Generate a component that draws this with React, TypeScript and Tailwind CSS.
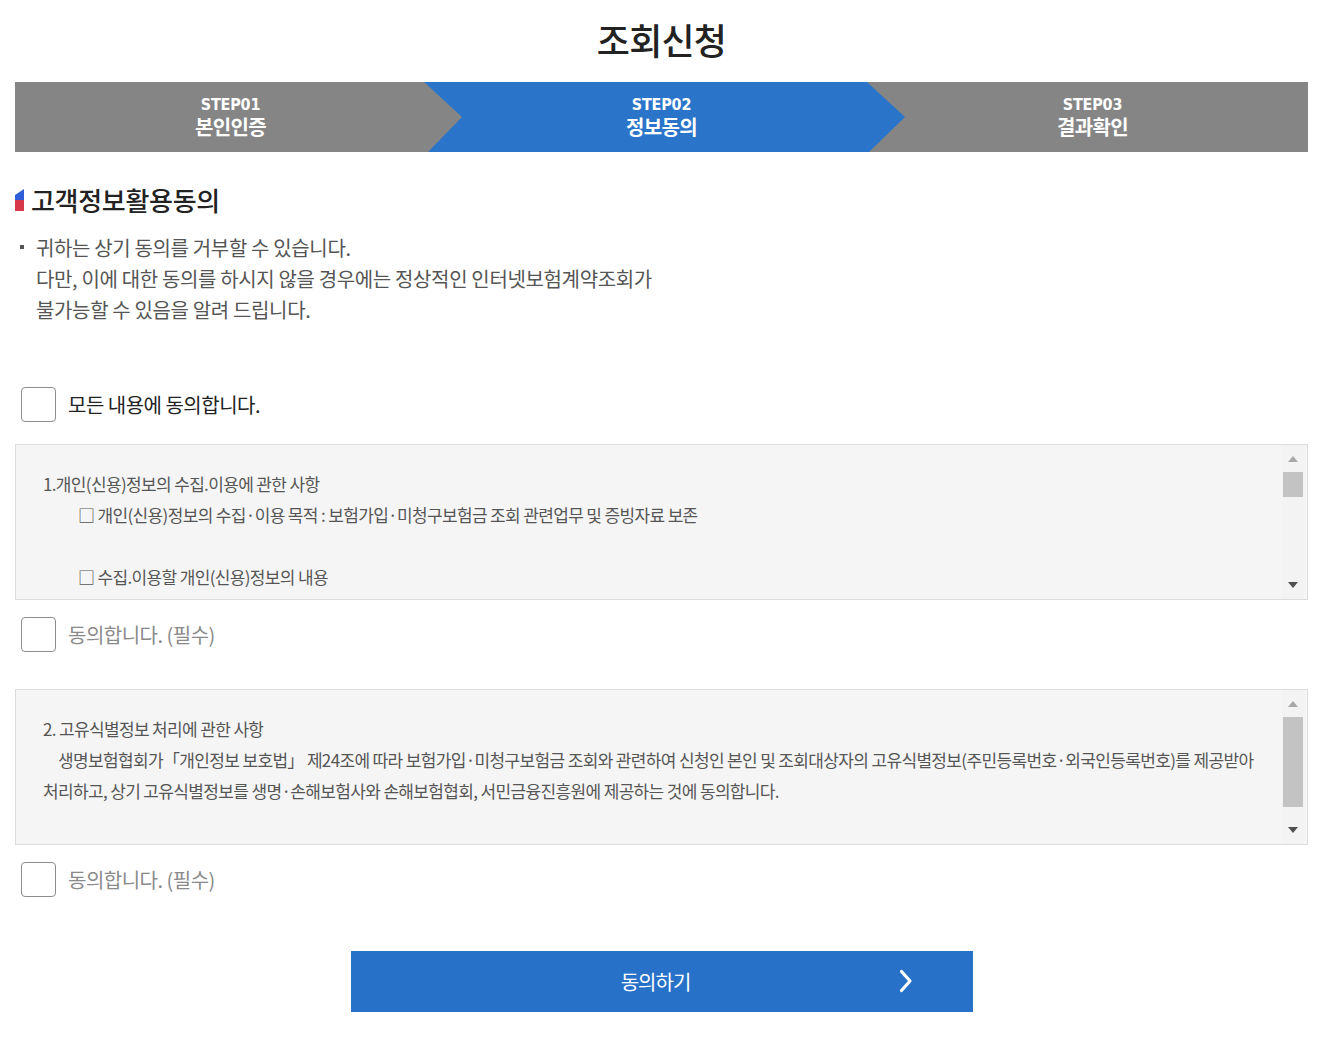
import React from "react";

const KR = "font-['Noto_Sans_CJK_KR','Noto_Sans',sans-serif]";

const steps = [
  { no: "STEP01", label: "본인인증" },
  { no: "STEP02", label: "정보동의" },
  { no: "STEP03", label: "결과확인" },
];

function StepBar() {
  return (
    <div className="relative h-[70px] bg-[#858585] overflow-hidden">
      {/* 현재 단계 화살표 */}
      <div className="absolute top-0 left-[409px] h-full w-[481px] bg-[#2a74c9] [clip-path:polygon(0_0,443px_0,481px_50%,445px_100%,4px_100%,38px_50%)]" />
      <div className="relative grid grid-cols-3 h-full">
        {steps.map((s) => (
          <div key={s.no} className="flex flex-col items-center justify-center text-white">
            <span className="font-['DejaVu_Sans_Condensed','DejaVu_Sans',sans-serif] font-bold text-[16px] leading-[18px] tracking-[-0.2px]">
              {s.no}
            </span>
            <span className={`${KR} font-bold text-[20px] leading-[25px] tracking-[-0.6px]`}>{s.label}</span>
          </div>
        ))}
      </div>
    </div>
  );
}

function CheckRow({ label, muted }: { label: string; muted?: boolean }) {
  return (
    <label className="flex items-center gap-3 ml-[6px] h-[35px]">
      <span className="w-[35px] h-[35px] rounded-[4px] border-[1.5px] border-[#8d8d8d] bg-white" />
      <span className={`text-[20px] tracking-[-0.5px] ${muted ? "text-[#8a8a8a]" : "text-[#222]"}`}>{label}</span>
    </label>
  );
}

function Scrollbar({ thumbTop, thumbHeight }: { thumbTop: number; thumbHeight: number }) {
  return (
    <div className="relative w-[22px] mr-[3px] h-full bg-[#f3f3f3] flex flex-col items-center justify-between py-[11px]">
      <svg width="10" height="6" viewBox="0 0 10 6">
        <path d="M0 6 L5 0 L10 6 Z" fill="#a8a8a8" />
      </svg>
      <div
        className="absolute left-[1px] right-[1px] bg-[#c3c3c3]"
        style={{ top: thumbTop, height: thumbHeight }}
      />
      <svg width="10" height="6" viewBox="0 0 10 6">
        <path d="M0 0 L10 0 L5 6 Z" fill="#4f4f4f" />
      </svg>
    </div>
  );
}

function TermsBox({ children, thumbTop, thumbHeight }: { children: React.ReactNode; thumbTop: number; thumbHeight: number }) {
  return (
    <div className="h-[156px] border border-[#dcdcdc] bg-[#f5f5f5] flex overflow-hidden">
      <div className="flex-1 pl-[27px] pt-[23px] text-[17px] leading-[31px] tracking-[-0.65px] text-[#555] overflow-hidden whitespace-nowrap">
        {children}
      </div>
      <Scrollbar thumbTop={thumbTop} thumbHeight={thumbHeight} />
    </div>
  );
}

export default function App() {
  return (
    <div className={`${KR} w-[1329px] min-h-[1042px] bg-white pl-[15px] pr-[21px] pb-[30px]`}>
      <h1 className="text-center text-[36px] font-medium text-[#222] leading-[46px] pt-[16px] pb-[20px] tracking-[-0.8px]">조회신청</h1>

      <StepBar />

      {/* 고객정보활용동의 */}
      <div className="flex items-center gap-[7px] mt-[31px]">
        <svg width="9" height="22" viewBox="0 0 9 22">
          <path d="M0 6 L9 0 L9 11 L0 11 Z" fill="#2f5fd6" />
          <path d="M0 11 L9 11 L9 22 L0 22 Z" fill="#d8394a" />
        </svg>
        <h2 className="text-[26px] font-medium text-[#222] leading-[34px] tracking-[-0.3px]">고객정보활용동의</h2>
      </div>

      <div className="flex ml-[5px] mt-[15px] text-[20px] leading-[31px] tracking-[-0.35px] text-[#555]">
        <span className="w-[16px] flex justify-start pt-[13px]">
          <span className="w-[4px] h-[4px] bg-[#555] block" />
        </span>
        <p>
          귀하는 상기 동의를 거부할 수 있습니다.
          <br />
          다만, 이에 대한 동의를 하시지 않을 경우에는 정상적인 인터넷보험계약조회가
          <br />
          불가능할 수 있음을 알려 드립니다.
        </p>
      </div>

      <div className="mt-[62px]">
        <CheckRow label="모든 내용에 동의합니다." />
      </div>

      <div className="mt-[22px]">
        <TermsBox thumbTop={27} thumbHeight={25}>
          <p>1.개인(신용)정보의 수집.이용에 관한 사항</p>
          <p className="pl-[35px]">□ 개인(신용)정보의 수집·이용 목적 : 보험가입·미청구보험금 조회 관련업무 및 증빙자료 보존</p>
          <p>&nbsp;</p>
          <p className="pl-[35px]">□ 수집.이용할 개인(신용)정보의 내용</p>
        </TermsBox>
      </div>

      <div className="mt-[17px]">
        <CheckRow label="동의합니다. (필수)" muted />
      </div>

      <div className="mt-[37px]">
        <TermsBox thumbTop={27} thumbHeight={90}>
          <p>2. 고유식별정보 처리에 관한 사항</p>
          <p className="pl-[15px]">
            생명보험협회가「개인정보 보호법」 제24조에 따라 보험가입·미청구보험금 조회와 관련하여 신청인 본인 및 조회대상자의 고유식별정보(주민등록번호·외국인등록번호)를 제공받아
          </p>
          <p>처리하고, 상기 고유식별정보를 생명·손해보험사와 손해보험협회, 서민금융진흥원에 제공하는 것에 동의합니다.</p>
        </TermsBox>
      </div>

      <div className="mt-[17px]">
        <CheckRow label="동의합니다. (필수)" muted />
      </div>

      <div className="flex justify-center mt-[54px]">
        <button className="relative w-[622px] h-[61px] bg-[#2771c8] text-white text-[20px] tracking-[-1px] flex items-center justify-center">
          <span className="mr-[12px]">동의하기</span>
          <svg className="absolute right-[60px] top-[18px]" width="14" height="24" viewBox="0 0 14 24">
            <path d="M2.5 2.5 L11 12 L2.5 21.5" fill="none" stroke="white" strokeWidth="3.2" strokeLinecap="round" strokeLinejoin="round" />
          </svg>
        </button>
      </div>
    </div>
  );
}
